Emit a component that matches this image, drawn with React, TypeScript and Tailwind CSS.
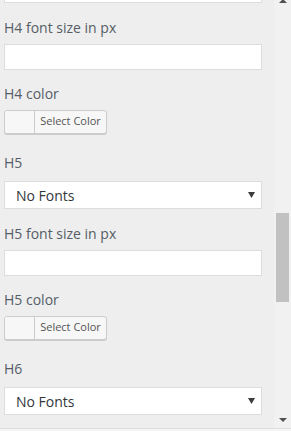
const font = { fontFamily: '"Open Sans", "Noto Sans", sans-serif' }

function Label({ children, className = '' }: { children: string; className?: string }) {
  return (
    <div className={`text-[14px] leading-[20px] font-medium text-[#555d66] ${className}`}>{children}</div>
  )
}

function TextInput({ className = '' }: { className?: string }) {
  return <input type="text" className={`block w-[258px] h-[26px] bg-white border border-[#ddd] outline-none ${className}`} />
}

function FontSelect({ className = '' }: { className?: string }) {
  return (
    <div
      className={`flex items-center justify-between w-[258px] h-[28px] bg-white border border-[#ddd] pl-[11px] pr-[6px] ${className}`}
    >
      <span className="text-[14px] text-[#32373c]">No Fonts</span>
      <svg width="7" height="6" viewBox="0 0 7 6">
        <polygon points="0,0 7,0 3.5,6" fill="#3c3c3c" />
      </svg>
    </div>
  )
}

function ColorButton({ className = '' }: { className?: string }) {
  return (
    <div
      className={`flex w-[103px] h-[24px] rounded-[3px] border border-[#ccc] bg-[#f7f7f7] shadow-[0_1px_0_#ccc] overflow-hidden ${className}`}
    >
      <div className="w-[30px] h-full bg-[#f7f7f7] border-r border-[#ccc]" />
      <div className="flex-1 flex items-center justify-center text-[11px] text-[#555] pb-[1px]">Select Color</div>
    </div>
  )
}

function HeadingGroup({ level }: { level: string }) {
  return (
    <>
      <Label className="mt-[15px]">{`${level} font size in px`}</Label>
      <TextInput className="mt-[6px]" />
      <Label className="mt-[14px]">{`${level} color`}</Label>
      <ColorButton className="mt-[6px]" />
    </>
  )
}

export default function App() {
  return (
    <div className="w-[291px] h-[431px] bg-[#eee] overflow-hidden flex flex-col" style={font}>
      <div className="flex h-[428px] overflow-hidden">
        <div className="flex-1 flex flex-col pl-[4px]">
          {/* tail of the H4 select, scrolled mostly out of view */}
          <div className="w-[258px] h-[3px] bg-white border-x border-b border-[#ddd]" />
          <HeadingGroup level="H4" />
          <Label className="mt-[19px]">H5</Label>
          <FontSelect className="mt-[8px]" />
          <HeadingGroup level="H5" />
          <Label className="mt-[19px]">H6</Label>
          <FontSelect className="mt-[8px]" />
        </div>
        <div className="w-[17px] flex flex-col items-center bg-[#f1f1f1]">
          <svg width="8" height="4" viewBox="0 0 8 4" className="shrink-0">
            <polygon points="4,-1 8,3 0,3" fill="#505050" />
          </svg>
          <div className="w-[13px] h-[89px] mt-[209px] bg-[#c1c1c1] shrink-0" />
          <div className="flex-1" />
          <svg width="8" height="4" viewBox="0 0 8 4" className="shrink-0 mb-[6px]">
            <polygon points="0,0 8,0 4,4" fill="#505050" />
          </svg>
        </div>
      </div>
      <div className="h-px bg-[#ddd]" />
      <div className="flex-1 bg-[#f5f5f5]" />
    </div>
  )
}
